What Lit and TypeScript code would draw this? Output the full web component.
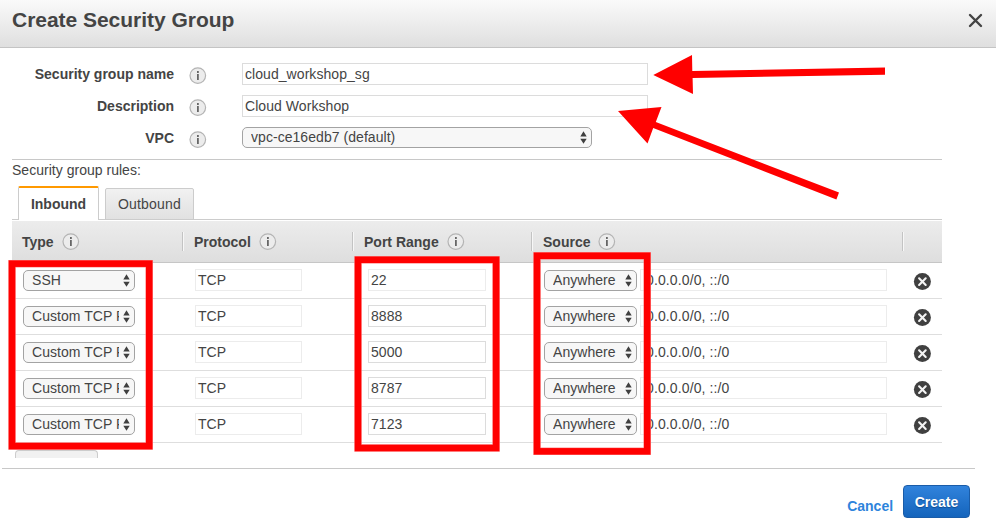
import { LitElement, html, css, svg } from "lit";
import { customElement, property } from "lit/decorators.js";

@customElement("info-icon")
class InfoIcon extends LitElement {
  static styles = css`
    :host { display: block; width: 18px; height: 18px; flex: none; }
    svg { display: block; }
  `;
  render() {
    return html`<svg width="18" height="18" viewBox="0 0 18 18">
      <circle cx="8.8" cy="8.6" r="7.8" fill="#ececec" stroke="#b4b4b4" stroke-width="1.2"/>
      <rect x="8" y="4" width="1.8" height="2" fill="#666"/>
      <rect x="8" y="7" width="1.8" height="6" fill="#666"/>
    </svg>`;
  }
}

@customElement("select-box")
class SelectBox extends LitElement {
  @property() label = "";
  static styles = css`
    :host {
      display: flex; align-items: center; box-sizing: border-box; height: 21px;
      border: 1px solid #a3a3a3; border-radius: 5px; background: #f7f7f7;
      padding: 0 4px 0 8px; gap: 4px;
    }
    .label { flex: 1; min-width: 0; overflow: hidden; white-space: nowrap; line-height: 19px; letter-spacing: .05px; }
    svg { flex: none; display: block; }
  `;
  render() {
    return html`<span class="label">${this.label}</span>
      <svg width="7" height="13" viewBox="0 0 7 13">
        <path d="M3.5 .2L6.7 5.4H.3zM3.5 12.8L6.7 7.8H.3z" fill="#404040"/>
      </svg>`;
  }
}

@customElement("app-root")
class AppRoot extends LitElement {
  static styles = css`
    :host {
      display: block; position: relative; width: 996px; height: 529px; overflow: hidden;
      background: #fff; color: #444;
      font: 14px "Liberation Sans", Arial, sans-serif;
    }
    .header {
      display: flex; justify-content: space-between; box-sizing: border-box; height: 48px;
      padding: 6px 13px 0 12px; border-bottom: 1px solid #c4c4c4;
      background: linear-gradient(#fafafa, #dfdfdf);
    }
    .title { font-size: 21px; font-weight: bold; line-height: 28px; letter-spacing: -.03px; }
    .close { margin-top: 7px; }
    .form {
      display: grid; grid-template-columns: 174px 18px 406px; column-gap: 14.5px;
      grid-auto-rows: 22px; row-gap: 10px; padding-top: 15px;
    }
    .form-label { font-weight: bold; text-align: right; line-height: 22px; }
    .form info-icon { margin-top: 4px; }
    .form .field, .form select-box { margin-left: 21px; }
    .form .field { width: 406px; }
    .form select-box { width: 350px; }
    .field {
      box-sizing: border-box; height: 22px; border: 1px solid #dcdcdc; line-height: 20px;
      padding-left: 2px; white-space: nowrap; letter-spacing: .06px;
    }
    .field.off { border-color: #ececec; }
    .rules { margin: 10px 54px 0 12px; border-top: 1px solid #c8c8c8; }
    .caption { height: 26px; line-height: 21px; letter-spacing: .02px; }
    .tabs { display: flex; align-items: flex-end; height: 34px; gap: 6px; padding-left: 6px; box-shadow: inset 0 -1px #ccc; }
    .tab {
      box-sizing: border-box; text-align: center; border: 1px solid #ccc; height: 32px; width: 89px;
      line-height: 30px; background: linear-gradient(#f1f1f1, #e1e1e1); border-radius: 2px 2px 0 0;
      letter-spacing: .2px;
    }
    .tab.active {
      width: 81px; height: 34px; border-top: 2px solid #f90; border-bottom: 0; line-height: 33px;
      font-weight: bold; background: #fff; letter-spacing: 0;
    }
    .head, .row { display: grid; grid-template-columns: 170px 170px 179px 371px 40px; box-sizing: border-box; }
    .head {
      height: 42px; margin-top: 1px; border-bottom: 1px solid #c6c6c6; font-weight: bold;
      background: linear-gradient(#ececec, #dedede); align-items: center;
    }
    .th { display: flex; align-items: center; gap: 8px; height: 19px; padding-left: 11px; border-left: 1px solid #c3c3c3; box-shadow: inset 1px 0 #f7f7f7; }
    .th:first-child { padding-left: 10px; border: 0; box-shadow: none; }
    .row { height: 36px; border-bottom: 1px solid #dedede; padding-top: 6px; align-items: start; }
    .row select-box { margin-top: 1px; }
    .type { width: 112px; margin-left: 11px; }
    .protocol { width: 107px; margin-left: 13px; }
    .port { width: 118px; margin-left: 16px; }
    .source { display: flex; margin-left: 13px; }
    .source select-box { width: 93px; }
    .source .field { width: 247px; margin-left: 3px; padding-left: 5px; letter-spacing: .12px; }
    .remove { margin: 4px 0 0 11px; display: block; }
    .add {
      box-sizing: border-box; width: 83px; height: 8px; margin: 7px 0 0 3px; border: 1px solid #ccc;
      border-bottom: 0; border-radius: 4px 4px 0 0; background: #f1f1f1;
    }
    .footer {
      display: flex; justify-content: flex-end; gap: 10px; margin: 10px 21px 0 2px;
      border-top: 1px solid #c8c8c8; padding: 16px 5px 0 0; font-weight: bold;
    }
    .cancel { color: #2e84dc; line-height: 42px; letter-spacing: -.03px; }
    .create {
      box-sizing: border-box; width: 67px; height: 33px; text-align: center; line-height: 32px; color: #fff;
      border: 1px solid #1a5ca8; border-radius: 4px; background: linear-gradient(#3183dc, #1464bc);
      text-shadow: 0 1px 1px #0d4a90; letter-spacing: 0;
    }
    .marks { position: absolute; left: 0; top: 0; pointer-events: none; }
  `;

  ports = ["22", "8888", "5000", "8787", "7123"];
  marks = [
    [8.3, 260, 144.6, 189.8],
    [354.3, 256.1, 145.5, 195.6],
    [533.3, 252.1, 117.6, 202.9],
  ];

  render() {
    return html`
      <div class="header">
        <div class="title">Create Security Group</div>
        <svg class="close" width="15" height="15" viewBox="0 0 15 15">
          <path d="M2 2L13 13M13 2L2 13" stroke="#444" stroke-width="2.4" stroke-linecap="round"/>
        </svg>
      </div>
      <div class="form">
        <div class="form-label">Security group name</div><info-icon></info-icon>
        <div class="field">cloud_workshop_sg</div>
        <div class="form-label">Description</div><info-icon></info-icon>
        <div class="field">Cloud Workshop</div>
        <div class="form-label">VPC</div><info-icon></info-icon>
        <select-box label="vpc-ce16edb7 (default)"></select-box>
      </div>
      <div class="rules">
        <div class="caption">Security group rules:</div>
        <div class="tabs">
          <div class="tab active">Inbound</div>
          <div class="tab">Outbound</div>
        </div>
        <div class="head">
          ${["Type", "Protocol", "Port Range", "Source"].map(
            (t) => html`<div class="th">${t}<info-icon></info-icon></div>`)}
          <div class="th"></div>
        </div>
        ${this.ports.map((port, i) => html`
          <div class="row">
            <select-box class="type" label=${i ? "Custom TCP Rule" : "SSH"}></select-box>
            <div class="field off protocol">TCP</div>
            <div class="field port ${i ? "" : "off"}">${port}</div>
            <div class="source">
              <select-box label="Anywhere"></select-box>
              <div class="field off">0.0.0.0/0, ::/0</div>
            </div>
            <svg class="remove" width="18" height="18" viewBox="0 0 18 18">
              <circle cx="9.4" cy="8.6" r="8.5" fill="#404040"/>
              <path d="M6.1 5.3L12.7 11.9M12.7 5.3L6.1 11.9" stroke="#f4f4f4" stroke-width="2.1" stroke-linecap="round"/>
            </svg>
          </div>`)}
        <div class="add"></div>
      </div>
      <div class="footer">
        <div class="cancel">Cancel</div>
        <div class="create">Create</div>
      </div>
      <svg class="marks" width="996" height="529" viewBox="0 0 996 529">
        ${this.marks.map(([x, y, w, h]) => svg`
          <rect x=${x + 3.7} y=${y + 3.7} width=${w - 7.4} height=${h - 7.4} fill="none" stroke="#ff7070" stroke-width="7.4"/>
          <rect x=${x + 3.7} y=${y + 3.7} width=${w - 7.4} height=${h - 7.4} fill="none" stroke="#f00" stroke-width="6.4"/>`)}
        <path d="M653.3 75L692 55L692.3 71L885 67.4V74.8L692.6 78L693 94Z" fill="#f00"/>
        <path d="M618 111L661.5 107L655.8 122L839 192.6L836.4 199.4L653.2 128L647.5 143.5Z" fill="#f00"/>
      </svg>
    `;
  }
}
